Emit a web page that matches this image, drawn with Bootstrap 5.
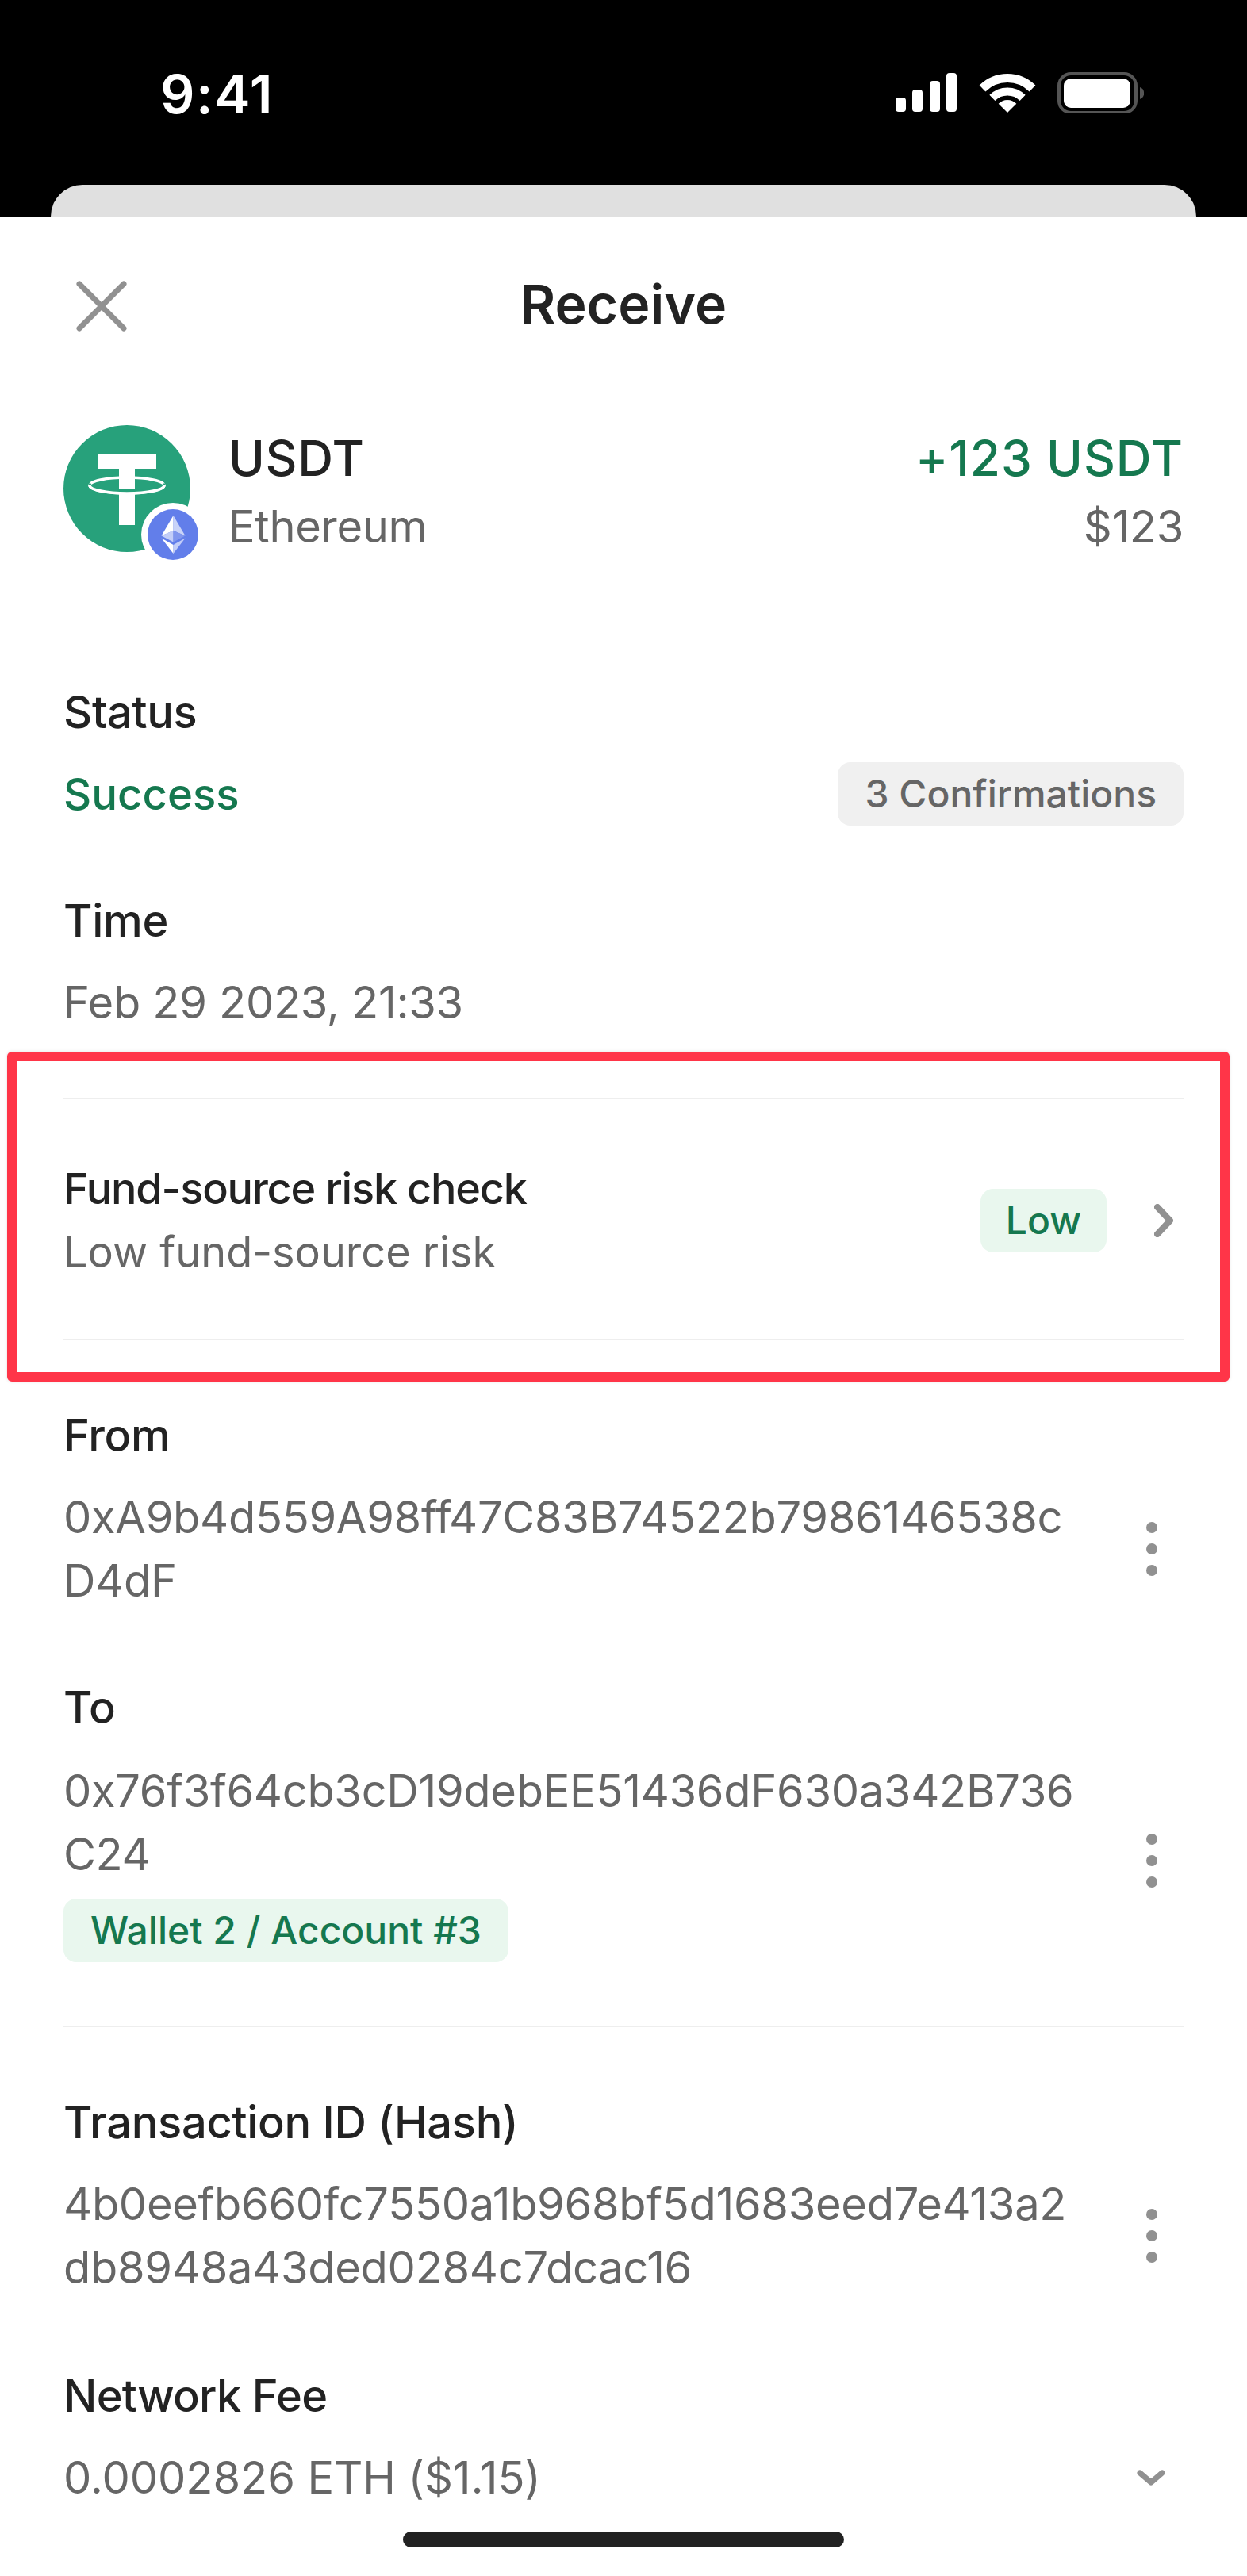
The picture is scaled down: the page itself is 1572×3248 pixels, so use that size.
<!DOCTYPE html>
<html lang="en">
<head>
<meta charset="utf-8">
<title>Receive</title>
<link href="https://cdn.jsdelivr.net/npm/bootstrap@5.3.0/dist/css/bootstrap.min.css" rel="stylesheet">
<style>
html,body{margin:0;background:#fff}
body{font-family:Inter,"Liberation Sans",sans-serif;color:#222}
.phone{width:1572px;height:3248px;overflow:hidden}
.status-zone{height:273px;background:#000}
.status-row{height:233px;padding:91px 130px 0 202px}
.clock{font-size:68px;line-height:54px;font-weight:600;color:#fff;letter-spacing:1.500px}
.sheet-peek{height:40px;margin:0 64px;background:#e0e0e0;border-radius:40px 40px 0 0}
.top-nav{height:226px;padding:0 80px 0 96px}
.top-title{font-size:68px;line-height:80px;font-weight:600;color:#222;margin-bottom:6px}
.top-nav .title-slot{left:0;right:0}
.body-pad{padding:0 80px}
.token-row{height:160px;margin-top:37px}
.avatar-box{width:160px;height:160px;margin-right:48px}
.chain-badge{right:-18px;bottom:-18px;width:80px;height:80px}
.tok-col{padding-top:8px}
.tok-name{font-size:62px;line-height:84px;font-weight:500;letter-spacing:.6px}
.tok-usd{font-size:56px;line-height:80px;color:#666;padding-top:4px;letter-spacing:-.3px}
.amount{font-size:62px;line-height:84px;font-weight:500;color:#15784f;letter-spacing:.9px}
.lbl{font-size:56px;line-height:80px;font-weight:500;color:#222;letter-spacing:-.3px}
.lbl-tight{letter-spacing:-.7px}
.val{font-size:56px;line-height:80px;color:#666;letter-spacing:-.3px}
.val-green{color:#15784f;font-weight:500;font-size:54.500px;letter-spacing:0}
.val-fee{letter-spacing:-.05px}
.gap-val{margin-top:23px}
.gap-val-wide{margin-top:25px}
.sec-status{margin-top:162px}
.sec{margin-top:80px}
.sec-wide{margin-top:82px}
.pill-soft{font-size:48px;line-height:80px;padding:0 34px;border-radius:16px;font-weight:500}
.pill-grey{background:#f0f0f0;color:#666}
.pill-green{background:#e9f7ee;color:#15784f}
.pill-soft.pill-tight{padding:0 32px}
.hr-line{height:2px;background:#eeeeee}
.fund-row{height:302px;padding-top:3px}
.lbl.fund-title{font-size:54px;letter-spacing:-1.200px}
.val.fund-sub{font-size:54px;letter-spacing:0}
.addr{width:1280px;word-break:break-all}
.kebab{margin-right:33px;width:14px;height:68px}
.chev-r{width:24px;height:42px;margin:0 13px 0 60px}
.chev-d{width:36px;height:20px;margin-right:23px}
.alert-frame{left:9px;top:1326px;width:1541px;height:416px;border:12px solid #ff3548;border-radius:6px;box-shadow:0 0 4px rgba(0,0,0,.12)}
.home-bar{left:508px;bottom:36px;width:556px;height:20px;background:#222;border-radius:10px}
</style>
</head>
<body>
<div class="phone position-relative">
  <div class="status-zone">
    <div class="status-row d-flex justify-content-between align-items-start">
      <div class="clock">9:41</div>
      <svg width="313" height="52" viewBox="0 0 313 52" fill="#fff" aria-hidden="true">
        <rect x="0" y="32" width="13" height="18" rx="4"/><rect x="21" y="22" width="13" height="28" rx="4"/><rect x="43" y="11" width="13" height="39" rx="4"/><rect x="64" y="1" width="13" height="49" rx="4"/>
        <g transform="translate(106 1)">
          <path d="M3.5 19.5A44.500 44.500 0 0 1 66.500 19.500" fill="none" stroke="#fff" stroke-width="11"/>
          <path d="M15.900 31.400A27 27 0 0 1 54.100 31.400" fill="none" stroke="#fff" stroke-width="10"/>
          <path d="M35 50L23.700 38.700A16 16 0 0 1 46.300 38.700Z"/>
        </g>
        <rect x="206" y="2" width="97" height="49" rx="15" fill="none" stroke="#555" stroke-width="4"/>
        <rect x="212" y="8" width="84" height="37" rx="9"/>
        <path d="M308 19a8 8 0 0 1 0 15Z" fill="#555"/>
      </svg>
    </div>
    <div class="sheet-peek"></div>
  </div>

  <div class="top-nav d-flex align-items-center position-relative">
    <svg width="64" height="64" viewBox="0 0 64 64" fill="none" stroke="#919191" stroke-width="7" stroke-linecap="round" aria-hidden="true"><path d="M4 4L60 60M60 4L4 60"/></svg>
    <div class="title-slot position-absolute text-center top-title">Receive</div>
  </div>

  <div class="body-pad">
    <div class="token-row d-flex align-items-center">
      <div class="avatar-box position-relative flex-shrink-0">
        <svg width="160" height="160" viewBox="0 0 160 160" aria-hidden="true">
          <circle cx="80" cy="80" r="80" fill="#27a17b"/>
          <ellipse cx="80" cy="76" rx="47" ry="10" fill="none" stroke="#fff" stroke-width="3.500"/>
          <path d="M43 37H117V55H90V81H70V55H43Z" fill="#fff"/>
          <rect x="70" y="84" width="20" height="42" fill="#fff"/>
          <path d="M33 76A47 10 0 0 0 127 76" fill="none" stroke="#27a17b" stroke-width="3" transform="translate(0 -2.500)"/>
          <path d="M33 76A47 10 0 0 0 127 76" fill="none" stroke="#fff" stroke-width="3.500"/>
        </svg>
        <svg class="chain-badge position-absolute" viewBox="0 0 80 80" aria-hidden="true">
          <circle cx="40" cy="40" r="40" fill="#fff"/>
          <circle cx="40" cy="40" r="32" fill="#627eea"/>
          <path d="M40.500 16V35L25.500 41.500Z" fill="#fff"/>
          <path d="M40.500 16V35L55.500 41.500Z" fill="#c9d3f8"/>
          <path d="M40.500 35L25.500 41.500L40.500 49.500Z" fill="#c3cef8"/>
          <path d="M40.500 35L55.500 41.500L40.500 49.500Z" fill="#8197ee"/>
          <path d="M25.500 44.500L40.500 53V64Z" fill="#fff"/>
          <path d="M55.500 44.500L40.500 53V64Z" fill="#c3cef8"/>
        </svg>
      </div>
      <div class="flex-grow-1 tok-col">
        <div class="tok-name">USDT</div>
        <div class="tok-usd">Ethereum</div>
      </div>
      <div class="text-end tok-col">
        <div class="amount">+123 USDT</div>
        <div class="tok-usd">$123</div>
      </div>
    </div>

    <div class="sec-status">
      <div class="lbl">Status</div>
      <div class="gap-val d-flex justify-content-between align-items-center">
        <div class="val val-green">Success</div>
        <span class="pill-soft pill-grey">3 Confirmations</span>
      </div>
    </div>

    <div class="sec">
      <div class="lbl">Time</div>
      <div class="val gap-val">Feb 29 2023, 21:33</div>
    </div>

    <div class="hr-line sec"></div>
    <div class="fund-row d-flex align-items-center">
      <div class="flex-grow-1">
        <div class="lbl fund-title">Fund-source risk check</div>
        <div class="val fund-sub">Low fund-source risk</div>
      </div>
      <span class="pill-soft pill-green pill-tight">Low</span>
      <svg class="chev-r" viewBox="0 0 24 42" fill="none" stroke="#919191" stroke-width="8" stroke-linecap="round" stroke-linejoin="round" aria-hidden="true"><path d="M4 4L20 21L4 38"/></svg>
    </div>
    <div class="hr-line"></div>

    <div class="sec">
      <div class="lbl">From</div>
      <div class="gap-val d-flex justify-content-between align-items-center">
        <div class="val addr">0xA9b4d559A98ff47C83B74522b7986146538cD4dF</div>
        <svg class="kebab" viewBox="0 0 14 68" fill="#919191" aria-hidden="true"><circle cx="7" cy="7" r="7"/><circle cx="7" cy="34" r="7"/><circle cx="7" cy="61" r="7"/></svg>
      </div>
    </div>

    <div class="sec">
      <div class="lbl">To</div>
      <div class="gap-val-wide d-flex justify-content-between align-items-center">
        <div class="flex-shrink-0">
          <div class="val addr">0x76f3f64cb3cD19debEE51436dF630a342B736C24</div>
          <div class="mt-3"><span class="pill-soft pill-green d-inline-block">Wallet 2 / Account #3</span></div>
        </div>
        <svg class="kebab" viewBox="0 0 14 68" fill="#919191" aria-hidden="true"><circle cx="7" cy="7" r="7"/><circle cx="7" cy="34" r="7"/><circle cx="7" cy="61" r="7"/></svg>
      </div>
    </div>

    <div class="hr-line sec"></div>

    <div class="sec">
      <div class="lbl">Transaction ID (Hash)</div>
      <div class="gap-val d-flex justify-content-between align-items-center">
        <div class="val addr">4b0eefb660fc7550a1b968bf5d1683eed7e413a2db8948a43ded0284c7dcac16</div>
        <svg class="kebab" viewBox="0 0 14 68" fill="#919191" aria-hidden="true"><circle cx="7" cy="7" r="7"/><circle cx="7" cy="34" r="7"/><circle cx="7" cy="61" r="7"/></svg>
      </div>
    </div>

    <div class="sec-wide">
      <div class="lbl lbl-tight">Network Fee</div>
      <div class="gap-val d-flex justify-content-between align-items-center">
        <div class="val val-fee">0.0002826 ETH ($1.15)</div>
        <svg class="chev-d" viewBox="0 0 36 20" fill="none" stroke="#919191" stroke-width="7" stroke-linecap="round" stroke-linejoin="round" aria-hidden="true"><path d="M4 4L18 16L32 4"/></svg>
      </div>
    </div>
  </div>

  <div class="alert-frame position-absolute"></div>
  <div class="home-bar position-absolute"></div>
</div>
<script src="https://cdn.jsdelivr.net/npm/bootstrap@5.3.0/dist/js/bootstrap.bundle.min.js"></script>
</body>
</html>
